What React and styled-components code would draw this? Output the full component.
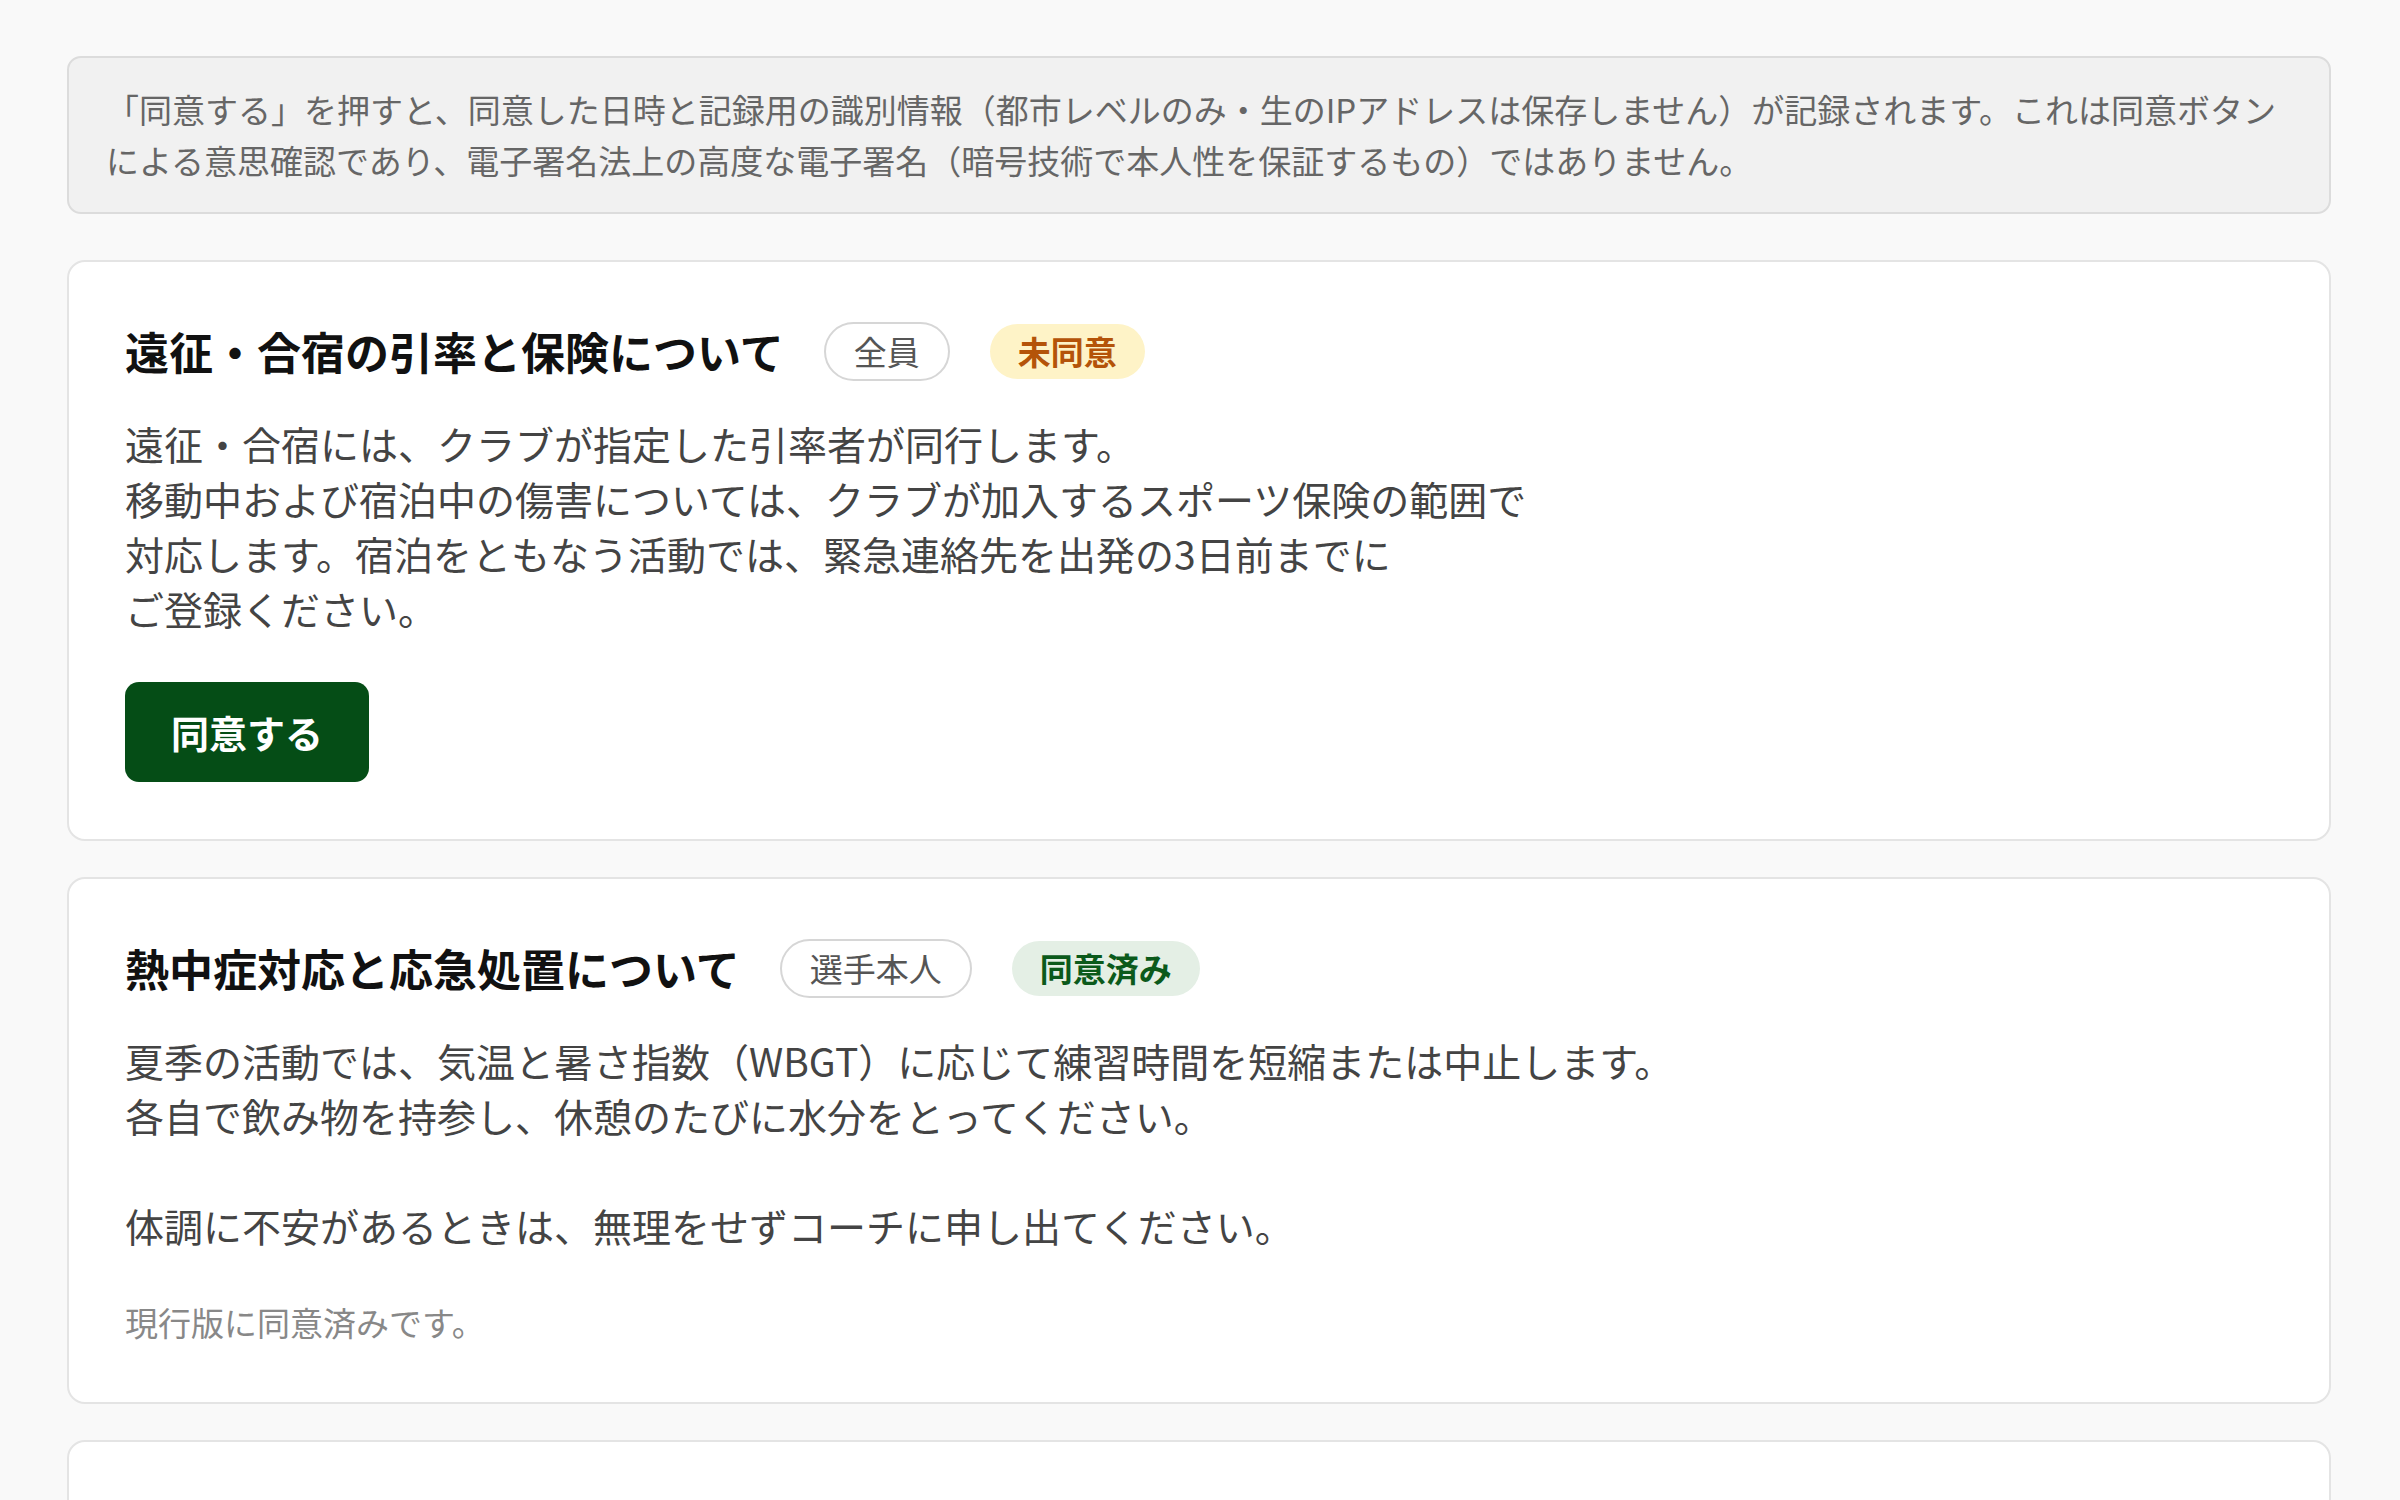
import React from 'react';
import styled, {createGlobalStyle, css} from 'styled-components';

const GlobalStyle = createGlobalStyle`
    html, body {
        margin: 0;
        padding: 0;
        background: #f9f9f9;
    }
    body {
        font-family: "Noto Sans CJK JP", "Noto Sans", sans-serif;
        color: #222;
    }
`;

const consents = [
    {
        title: '遠征・合宿の引率と保険について',
        target: '全員',
        agreed: false,
        body: '遠征・合宿には、クラブが指定した引率者が同行します。\n移動中および宿泊中の傷害については、クラブが加入するスポーツ保険の範囲で\n対応します。宿泊をともなう活動では、緊急連絡先を出発の3日前までに\nご登録ください。',
    },
    {
        title: '熱中症対応と応急処置について',
        target: '選手本人',
        agreed: true,
        body: '夏季の活動では、気温と暑さ指数（WBGT）に応じて練習時間を短縮または中止します。\n各自で飲み物を持参し、休憩のたびに水分をとってください。\n\n体調に不安があるときは、無理をせずコーチに申し出てください。',
    },
    {
        title: '写真撮影と掲載について',
        target: '全員',
        agreed: true,
        body: '練習や試合の様子を撮影し、クラブの会報やウェブサイトに掲載することがあります。\n掲載を希望しない場合は、コーチまでお知らせください。',
    },
];

const Page = styled.main`
    display: flex;
    flex-direction: column;
    gap: 36px;
    padding: 56px 69px 56px 67px;
`;

const Notice = styled.p`
    margin: 0 0 10px;
    padding: 26px 37px;
    background: #f1f1f1;
    border: 2px solid #dcdcdc;
    border-radius: 14px;
    color: #666;
    font-size: 33px;
    line-height: 51px;
`;

const Card = styled.section`
    display: flex;
    flex-direction: column;
    align-items: flex-start;
    padding: 60px 56px 57px;
    background: #fff;
    border: 2px solid #e4e4e4;
    border-radius: 18px;
`;

const Header = styled.div`
    display: flex;
    align-items: center;
    gap: 40px;
`;

const Title = styled.h2`
    margin: 0;
    font-size: 44px;
    font-weight: 700;
    line-height: 57px;
    color: #111;
`;

const Badge = styled.span`
    display: inline-block;
    padding: 8px 28px;
    border-radius: 999px;
    font-size: 33px;
    line-height: 39px;

    ${({variant}) => variant === 'outline' && css`
        border: 2px solid #d6d6d6;
        color: #555;
    `}
    ${({variant}) => variant === 'pending' && css`
        background: #fef3c7;
        color: #b45309;
        font-weight: 700;
    `}
    ${({variant}) => variant === 'done' && css`
        background: #e4efe5;
        color: #0b5a1b;
        font-weight: 700;
    `}
`;

const Body = styled.p`
    margin: 35px 0 0;
    font-size: 39px;
    line-height: 55px;
    color: #444;
    white-space: pre-line;
`;

const AgreeButton = styled.button`
    margin-top: 46px;
    padding: 23px 46px;
    border: none;
    border-radius: 14px;
    background: #054d16;
    color: #fff;
    font-family: inherit;
    font-size: 38px;
    font-weight: 700;
    line-height: 54px;
    cursor: pointer;
`;

const Done = styled.p`
    margin: 47px 0 0;
    font-size: 33px;
    line-height: 45px;
    color: #888;
`;

const ConsentCard = ({item}) => (
    <Card>
        <Header>
            <Title>{item.title}</Title>
            <Badge variant="outline">{item.target}</Badge>
            <Badge variant={item.agreed ? 'done' : 'pending'}>
                {item.agreed ? '同意済み' : '未同意'}
            </Badge>
        </Header>
        <Body>{item.body}</Body>
        {item.agreed
            ? <Done>現行版に同意済みです。</Done>
            : <AgreeButton type="button">同意する</AgreeButton>}
    </Card>
);

const App = () => {
    return (
        <Page>
            <GlobalStyle />
            <Notice>
                「同意する」を押すと、同意した日時と記録用の識別情報（都市レベルのみ・生のIPアドレスは保存しません）が記録されます。これは同意ボタンによる意思確認であり、電子署名法上の高度な電子署名（暗号技術で本人性を保証するもの）ではありません。
            </Notice>
            {consents.map((item, index) => (
                <ConsentCard item={item} key={index} />
            ))}
        </Page>
    );
};

export default App;
